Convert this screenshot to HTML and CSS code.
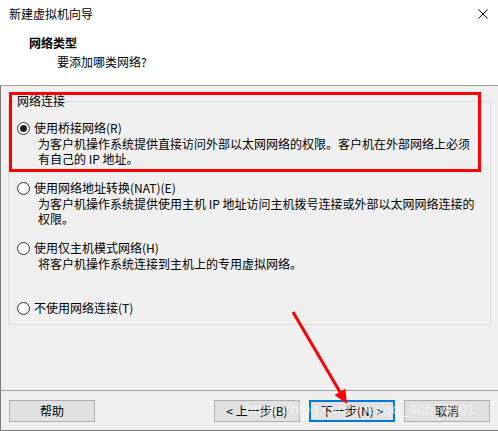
FILE: index.html
```html
<!DOCTYPE html>
<html lang="zh-CN">
<head>
  <meta charset="UTF-8" />
  <title>新建虚拟机向导</title>
  <link rel="stylesheet" href="styles.css">
</head>
<body>
  <div class="window">
    <div class="titlebar">
      <span class="title">新建虚拟机向导</span>
      <svg class="close" width="10" height="10" viewBox="0 0 10 10">
        <path d="M0.5 0.5 L9.5 9.5 M9.5 0.5 L0.5 9.5" stroke="#000" stroke-width="1" fill="none"/>
      </svg>
    </div>
    <div class="header">
      <div class="header-title">网络类型</div>
      <div class="header-sub">要添加哪类网络?</div>
    </div>
    <div class="content">
      <fieldset class="group">
        <legend>网络连接</legend>
        <div class="option">
          <div class="radio-row"><span class="radio checked"></span>使用桥接网络(R)</div>
          <div class="desc">为客户机操作系统提供直接访问外部以太网网络的权限。客户机在外部网络上必须<br>有自己的 IP 地址。</div>
        </div>
        <div class="option">
          <div class="radio-row"><span class="radio"></span>使用网络地址转换(NAT)(E)</div>
          <div class="desc">为客户机操作系统提供使用主机 IP 地址访问主机拨号连接或外部以太网网络连接的<br>权限。</div>
        </div>
        <div class="option">
          <div class="radio-row"><span class="radio"></span>使用仅主机模式网络(H)</div>
          <div class="desc">将客户机操作系统连接到主机上的专用虚拟网络。</div>
        </div>
        <div class="option last">
          <div class="radio-row"><span class="radio"></span>不使用网络连接(T)</div>
        </div>
      </fieldset>
    </div>
    <div class="footer">
      <button class="btn">帮助</button>
      <div class="spacer"></div>
      <button class="btn">&lt; 上一步(B)</button>
      <button class="btn default">下一步(N) &gt;</button>
      <button class="btn">取消</button>
    </div>

    <!-- annotations drawn over the dialog -->
    <div class="highlight"></div>
    <svg class="arrow" width="498" height="431" viewBox="0 0 498 431">
      <line x1="293" y1="312" x2="340" y2="392" stroke="#ff0000" stroke-width="3"/>
      <polygon points="347,404 334.5,395 345.3,388.7" fill="#ff0000"/>
    </svg>
    <div class="watermark">https://blog.csdn.net/qq_40576301</div>
  </div>
</body>
</html>
```

FILE: styles.css
```css
body {
  margin: 0;
  padding: 0;
  background: #fff;
  font-family: "Noto Sans CJK SC", "Microsoft YaHei", sans-serif;
  font-size: 12px;
  color: #000;
}
.window {
  position: relative;
  width: 498px;
  height: 431px;
  overflow: hidden;
}
.titlebar {
  height: 30px;
  background: #fff;
  display: flex;
  align-items: center;
  justify-content: space-between;
  padding: 0 10px 2px 9px;
  box-sizing: border-box;
}
.title {
  line-height: 14px;
}
.header {
  height: 56px;
  box-sizing: border-box;
  background: #fff;
  border-bottom: 1px solid #a0a0a0;
  padding-top: 5px;
}
.header-title {
  font-weight: bold;
  padding-left: 29px;
  line-height: 16px;
}
.header-sub {
  padding-left: 57px;
  margin-top: 3px;
  line-height: 16px;
}
.content {
  height: 304px;
  box-sizing: border-box;
  background: #f0f0f0;
  border-left: 1px solid #7a7a7a;
  padding: 8px 7px 0 7px;
}
.group {
  margin: 0;
  padding: 0 0 8px 8px;
  border: 1px solid #dcdcdc;
}
.group legend {
  padding: 0 1px;
  line-height: 14px;
  margin-left: -1px;
}
.option {
  height: 60px;
}
.option:first-of-type {
  margin-top: 12px;
}
.option.last {
  height: auto;
}
.radio-row {
  display: flex;
  align-items: center;
  line-height: 16px;
  white-space: nowrap;
}
.radio {
  width: 13px;
  height: 13px;
  box-sizing: border-box;
  border: 1px solid #333;
  border-radius: 50%;
  background: #fff;
  margin-right: 4px;
  display: flex;
  align-items: center;
  justify-content: center;
}
.radio.checked::after {
  content: "";
  width: 7px;
  height: 7px;
  border-radius: 50%;
  background: #222;
}
.desc {
  margin-left: 21px;
  line-height: 15px;
  white-space: nowrap;
}
.footer {
  height: 41px;
  box-sizing: border-box;
  background: #f0f0f0;
  border-top: 1px solid #a0a0a0;
  border-left: 1px solid #7a7a7a;
  border-bottom: 1px solid #7a7a7a;
  padding: 9px 8px 0 8px;
  display: flex;
  align-items: flex-start;
  gap: 9px;
}
.spacer {
  flex: 1;
}
.btn {
  width: 86px;
  height: 22px;
  box-sizing: border-box;
  background: #e1e1e1;
  border: 1px solid #adadad;
  font-family: inherit;
  font-size: 12px;
  color: #000;
  padding: 0;
  line-height: 18px;
}
.btn.default {
  border: 2px solid #0078d7;
}
.highlight {
  position: absolute;
  left: 9px;
  top: 92px;
  width: 472px;
  height: 80px;
  box-sizing: border-box;
  border: 3px solid #ff0000;
}
.arrow {
  position: absolute;
  left: 0;
  top: 0;
  pointer-events: none;
}
.watermark {
  position: absolute;
  left: 245px;
  top: 400px;
  font-family: "Liberation Sans", sans-serif;
  font-size: 15px;
  color: rgba(255, 255, 255, 0.55);
  pointer-events: none;
}
```
